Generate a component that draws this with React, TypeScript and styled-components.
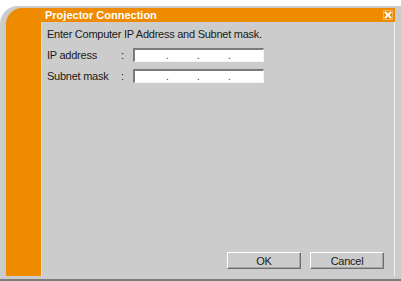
import React from "react";
import styled, { createGlobalStyle } from "styled-components";

const orange = "#ef8b00";
const panel = "#cccccc";

const GlobalStyle = createGlobalStyle`
  html, body {
    margin: 0;
    padding: 0;
    background: #ffffff;
  }
  body {
    font-family: Tahoma, "Liberation Sans", Arial, sans-serif;
    font-size: 11px;
  }
`;

export default function App() {
  return (
    <>
      <GlobalStyle />
      <SWindow>
        <SFrame>
          <STitleBar>
            <STitle>Projector Connection</STitle>
            <SClose aria-label="close">
              <svg width="8" height="8" viewBox="0 0 8 8">
                <path d="M1.5 1.5 L6.5 6.5 M6.5 1.5 L1.5 6.5" stroke="#fff" strokeWidth="1.8" strokeLinecap="square" />
              </svg>
            </SClose>
          </STitleBar>
          <SBody>
            <SSidebar />
            <SContent>
              <SIntro>Enter Computer IP Address and Subnet mask.</SIntro>
              <SFieldRow>
                <SLabel>IP address</SLabel>
                <SColon>:</SColon>
                <IpInput />
              </SFieldRow>
              <SFieldRow>
                <SLabel>Subnet mask</SLabel>
                <SColon>:</SColon>
                <IpInput />
              </SFieldRow>
              <SButtons>
                <SButton>OK</SButton>
                <SButton>Cancel</SButton>
              </SButtons>
            </SContent>
          </SBody>
        </SFrame>
      </SWindow>
    </>
  );
}

function IpInput() {
  return (
    <SIpBox>
      <SOctet />
      <SDot>.</SDot>
      <SOctet />
      <SDot>.</SDot>
      <SOctet />
      <SDot>.</SDot>
      <SOctet />
    </SIpBox>
  );
}

const SWindow = styled.div`
  margin-top: 6px;
  width: 401px;
  height: 275px;
  box-sizing: border-box;
  background: ${panel};
  border-top-left-radius: 18px;
  border-bottom: 2px solid #7c7c7c;
  padding: 2px 6px 3px 6px;
  display: flex;
`;

const SFrame = styled.div`
  flex: 1;
  display: flex;
  flex-direction: column;
  background: ${orange};
  border-top-left-radius: 16px;
`;

const STitleBar = styled.div`
  height: 14px;
  display: flex;
  align-items: center;
  justify-content: space-between;
  padding: 0 3px 0 39px;
`;

const STitle = styled.span`
  color: #ffffff;
  font-family: Tahoma, "Liberation Sans", Arial, sans-serif;
  font-weight: bold;
  font-size: 11px;
  line-height: 14px;
`;

const SClose = styled.div`
  width: 8px;
  height: 8px;
  display: flex;
  padding: 0;
  outline: 1px solid rgba(255, 255, 255, 0.35);
`;

const SBody = styled.div`
  flex: 1;
  display: flex;
`;

const SSidebar = styled.div`
  width: 35px;
  background: ${orange};
`;

const SContent = styled.div`
  flex: 1;
  display: flex;
  flex-direction: column;
  background: ${panel};
  border-left: 1px solid #dcdcdc;
  border-right: 1px solid #f2f2f2;
  padding: 5px 0 0 5px;
  color: #1a1a1a;
  letter-spacing: -0.25px;
`;

const SIntro = styled.div`
  line-height: 14px;
  margin-bottom: 7px;
`;

const SFieldRow = styled.div`
  display: flex;
  align-items: center;
  height: 14px;
  margin-bottom: 7px;
`;

const SLabel = styled.span`
  width: 74px;
`;

const SColon = styled.span`
  width: 12px;
`;

const SIpBox = styled.div`
  width: 131px;
  height: 14px;
  box-sizing: border-box;
  background: #ffffff;
  border-top: 2px solid #7a7a7a;
  border-left: 2px solid #7a7a7a;
  border-right: 1px solid #f4f4f4;
  border-bottom: 1px solid #f4f4f4;
  display: flex;
  align-items: flex-end;
  padding-left: 2px;
`;

const SOctet = styled.span`
  width: 29px;
`;

const SDot = styled.span`
  width: 2px;
  font-size: 10px;
  line-height: 10px;
  color: #333;
`;

const SButtons = styled.div`
  margin-top: auto;
  display: flex;
  justify-content: flex-end;
  gap: 9px;
  padding: 0 10px 7px 0;
`;

const SButton = styled.button`
  width: 74px;
  height: 17px;
  padding: 0;
  background: ${panel};
  font-family: Tahoma, "Liberation Sans", Arial, sans-serif;
  font-size: 11px;
  letter-spacing: -0.25px;
  color: #1a1a1a;
  border-top: 1px solid #ffffff;
  border-left: 1px solid #ffffff;
  border-right: 1px solid #6e6e6e;
  border-bottom: 1px solid #6e6e6e;
  box-shadow: inset -1px -1px 0 #a4a4a4;
`;
